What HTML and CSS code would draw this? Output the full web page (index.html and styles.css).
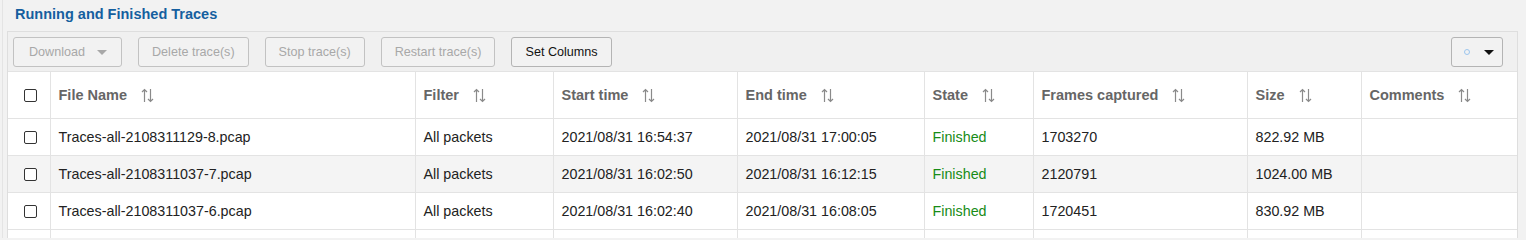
FILE: index.html
```html
<!DOCTYPE html>
<html>
<head>
<meta charset="utf-8">
<link rel="stylesheet" href="styles.css">
</head>
<body>
<div class="shell">
  <h2 class="title">Running and Finished Traces</h2>
  <div class="panel">
    <div class="toolbar">
      <button class="btn disabled dl">Download <span class="caret grey"></span></button>
      <button class="btn disabled">Delete trace(s)</button>
      <button class="btn disabled">Stop trace(s)</button>
      <button class="btn disabled">Restart trace(s)</button>
      <button class="btn">Set Columns</button>
      <button class="btn menu"><span class="ring"></span><span class="caret"></span></button>
    </div>
    <table class="grid">
      <colgroup>
        <col class="c-cb"><col class="c-file"><col class="c-filter"><col class="c-start"><col class="c-end"><col class="c-state"><col class="c-frames"><col class="c-size"><col>
      </colgroup>
      <thead>
        <tr>
          <th class="cb"><span class="box"></span></th>
          <th>File Name<svg class="sort" viewBox="0 0 13 15"><path d="M3.5 14V1.5M1 4L3.5 1.5L6 4M9.5 1v12.5M7 11l2.5 2.5L12 11"/></svg></th>
          <th>Filter<svg class="sort" viewBox="0 0 13 15"><path d="M3.5 14V1.5M1 4L3.5 1.5L6 4M9.5 1v12.5M7 11l2.5 2.5L12 11"/></svg></th>
          <th>Start time<svg class="sort" viewBox="0 0 13 15"><path d="M3.5 14V1.5M1 4L3.5 1.5L6 4M9.5 1v12.5M7 11l2.5 2.5L12 11"/></svg></th>
          <th>End time<svg class="sort" viewBox="0 0 13 15"><path d="M3.5 14V1.5M1 4L3.5 1.5L6 4M9.5 1v12.5M7 11l2.5 2.5L12 11"/></svg></th>
          <th>State<svg class="sort" viewBox="0 0 13 15"><path d="M3.5 14V1.5M1 4L3.5 1.5L6 4M9.5 1v12.5M7 11l2.5 2.5L12 11"/></svg></th>
          <th>Frames captured<svg class="sort" viewBox="0 0 13 15"><path d="M3.5 14V1.5M1 4L3.5 1.5L6 4M9.5 1v12.5M7 11l2.5 2.5L12 11"/></svg></th>
          <th>Size<svg class="sort" viewBox="0 0 13 15"><path d="M3.5 14V1.5M1 4L3.5 1.5L6 4M9.5 1v12.5M7 11l2.5 2.5L12 11"/></svg></th>
          <th>Comments<svg class="sort" viewBox="0 0 13 15"><path d="M3.5 14V1.5M1 4L3.5 1.5L6 4M9.5 1v12.5M7 11l2.5 2.5L12 11"/></svg></th>
        </tr>
      </thead>
      <tbody>
        <tr>
          <td class="cb"><span class="box"></span></td>
          <td>Traces-all-2108311129-8.pcap</td>
          <td>All packets</td>
          <td>2021/08/31 16:54:37</td>
          <td>2021/08/31 17:00:05</td>
          <td class="ok">Finished</td>
          <td>1703270</td>
          <td>822.92 MB</td>
          <td></td>
        </tr>
        <tr>
          <td class="cb"><span class="box"></span></td>
          <td>Traces-all-2108311037-7.pcap</td>
          <td>All packets</td>
          <td>2021/08/31 16:02:50</td>
          <td>2021/08/31 16:12:15</td>
          <td class="ok">Finished</td>
          <td>2120791</td>
          <td>1024.00 MB</td>
          <td></td>
        </tr>
        <tr>
          <td class="cb"><span class="box"></span></td>
          <td>Traces-all-2108311037-6.pcap</td>
          <td>All packets</td>
          <td>2021/08/31 16:02:40</td>
          <td>2021/08/31 16:08:05</td>
          <td class="ok">Finished</td>
          <td>1720451</td>
          <td>830.92 MB</td>
          <td></td>
        </tr>
        <tr>
          <td class="cb"><span class="box"></span></td>
          <td></td><td></td><td></td><td></td><td></td><td></td><td></td><td></td>
        </tr>
      </tbody>
    </table>
  </div>
</div>
</body>
</html>
```

FILE: styles.css
```css
html, body {
  margin: 0;
  padding: 0;
  background: #f2f2f2;
  font-family: "Liberation Sans", Arial, sans-serif;
  overflow: hidden;
}
.shell {
  margin-left: 2px;
  border-left: 1px solid #e4e4e4;
  padding: 0 8px 0 4px;
  height: 238px;
  overflow: hidden;
}
.title {
  margin: 0;
  height: 31px;
  line-height: 29px;
  padding-left: 8px;
  font-size: 14.5px;
  font-weight: bold;
  color: #155f9f;
}
.panel {
  border: 1px solid #dedede;
  border-bottom: none;
  background: #fff;
}
.toolbar {
  display: flex;
  align-items: center;
  gap: 16px;
  padding: 5px 14px 4px 5px;
  background: #f0f0f0;
  border-bottom: 1px solid #e3e3e3;
}
.btn {
  height: 30px;
  padding: 0 13px;
  border: 1px solid #b4b4b4;
  border-radius: 3px;
  background: #f2f2f2;
  font-family: "Liberation Sans", Arial, sans-serif;
  font-size: 12.6px;
  color: #111;
  display: inline-flex;
  align-items: center;
}
.btn.disabled {
  color: #a8a8a8;
  border-color: #c2c2c2;
}
.btn.dl {
  padding: 0 14px 0 15px;
}
.caret {
  display: inline-block;
  width: 0;
  height: 0;
  border-left: 5px solid transparent;
  border-right: 5px solid transparent;
  border-top: 5px solid #111;
  margin-left: 12px;
}
.caret.grey {
  border-top-color: #a8a8a8;
}
.menu {
  margin-left: auto;
  width: 52px;
  padding: 0 0 0 12px;
}
.menu .caret {
  margin-left: 14px;
}
.ring {
  width: 4px;
  height: 4px;
  border: 1px solid #9cc6ee;
  border-radius: 50%;
}
.grid {
  width: 100%;
  table-layout: fixed;
  border-collapse: collapse;
}
.c-cb { width: 42px; }
.c-file { width: 365px; }
.c-filter { width: 138px; }
.c-start { width: 184px; }
.c-end { width: 187px; }
.c-state { width: 109px; }
.c-frames { width: 214px; }
.c-size { width: 114px; }
.grid th, .grid td {
  border: 1px solid #e3e3e3;
  padding: 0 8px;
  text-align: left;
  white-space: nowrap;
  overflow: hidden;
}
.grid tr > :first-child { border-left: none; }
.grid tr > :last-child { border-right: none; }
.grid thead tr:first-child th { border-top: none; }
.grid th {
  height: 46px;
  font-size: 14.5px;
  font-weight: bold;
  color: #666;
}
.grid td {
  height: 36px;
  font-size: 14.3px;
  color: #222;
}
.grid tbody tr:nth-child(2) td {
  background: #f4f4f4;
}
.grid .cb {
  padding: 0 0 0 16px;
}
.box {
  display: block;
  width: 11px;
  height: 11px;
  border: 1px solid #333;
  border-radius: 2px;
  background: #fff;
}
.sort {
  width: 13px;
  height: 15px;
  margin-left: 14px;
  vertical-align: -3px;
  fill: none;
  stroke: #8a8a8a;
  stroke-width: 1.2;
}
.ok {
  color: #178c17 !important;
}
```
